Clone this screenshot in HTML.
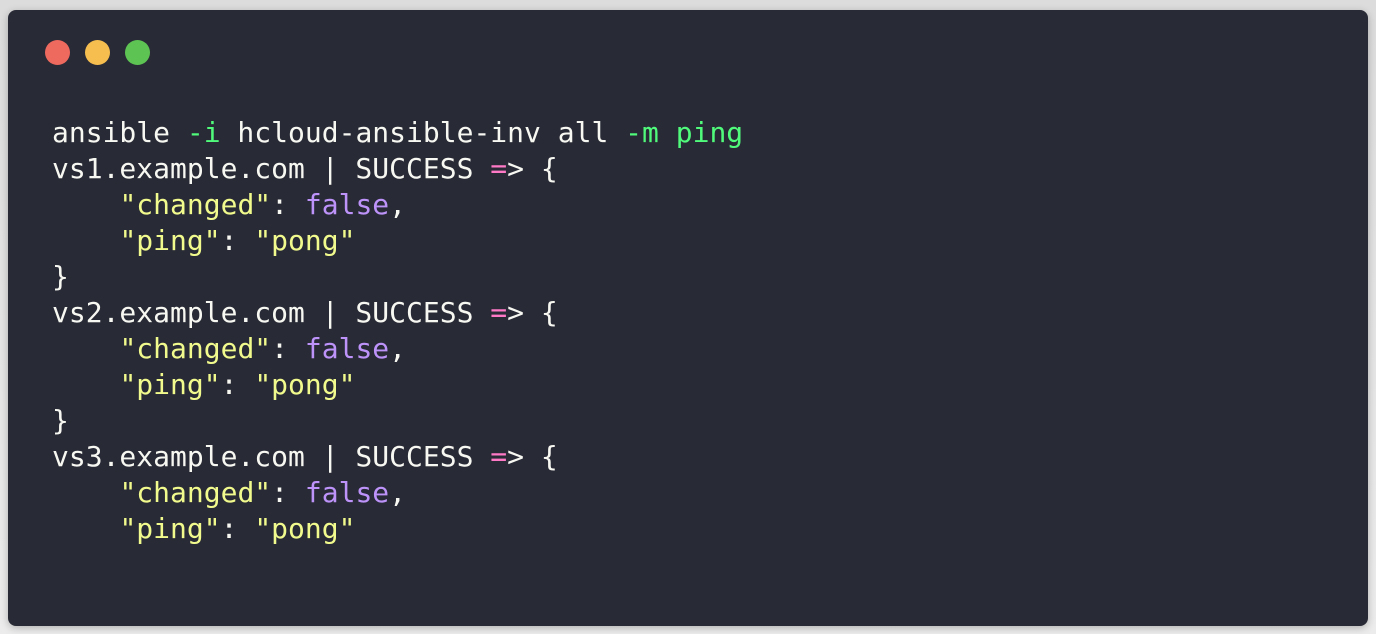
<!DOCTYPE html>
<html><head><style>
html,body{margin:0;padding:0;}
body{width:1376px;height:634px;background:linear-gradient(#dcdcdc,#ececec);position:relative;overflow:hidden;}
.win{position:absolute;left:8px;top:10px;width:1360px;height:616px;background:#282a36;border-radius:8px;box-shadow:0 2px 8px rgba(0,0,0,.25);}
.dot{position:absolute;top:30px;width:25px;height:25px;border-radius:50%;}
pre{position:absolute;left:44px;top:105px;margin:0;font-family:"DejaVu Sans Mono","Liberation Mono",monospace;font-size:28px;line-height:36px;color:#f8f8f2;}
.g{color:#50fa7b}.y{color:#f1fa8c}.p{color:#bd93f9}.k{color:#ff79c6}
</style></head><body>
<div class="win">
<div class="dot" style="left:37px;background:#ee695e"></div>
<div class="dot" style="left:77px;background:#f6be4f"></div>
<div class="dot" style="left:117px;background:#5dc453"></div>
<pre>ansible <span class="g">-i</span> hcloud-ansible-inv all <span class="g">-m ping</span>
vs1.example.com | SUCCESS <span class="k">=</span>&gt; {
    <span class="y">"changed"</span>: <span class="p">false</span>,
    <span class="y">"ping"</span>: <span class="y">"pong"</span>
}
vs2.example.com | SUCCESS <span class="k">=</span>&gt; {
    <span class="y">"changed"</span>: <span class="p">false</span>,
    <span class="y">"ping"</span>: <span class="y">"pong"</span>
}
vs3.example.com | SUCCESS <span class="k">=</span>&gt; {
    <span class="y">"changed"</span>: <span class="p">false</span>,
    <span class="y">"ping"</span>: <span class="y">"pong"</span></pre>
</div>
</body></html>
